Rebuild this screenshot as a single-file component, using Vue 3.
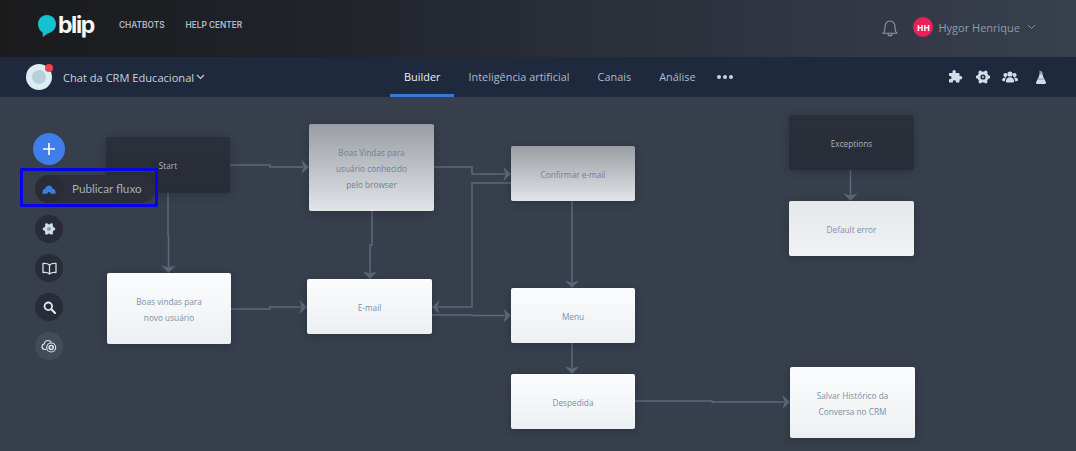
<script setup>
const nodes = [
  { id: 'start', x: 106, y: 137, w: 124, h: 56, kind: 'dark', lines: ['Start'] },
  { id: 'known', x: 309, y: 124, w: 125, h: 87, kind: 'faded', lines: ['Boas Vindas para', 'usuário conhecido', 'pelo browser'] },
  { id: 'confirm', x: 511, y: 146, w: 124, h: 55, kind: 'faded', lines: ['Confirmar e-mail'] },
  { id: 'exceptions', x: 789, y: 115, w: 125, h: 55, kind: 'dark', lines: ['Exceptions'] },
  { id: 'error', x: 789, y: 201, w: 125, h: 55, kind: 'pale', lines: ['Default error'] },
  { id: 'new', x: 107, y: 273, w: 124, h: 71, kind: 'light', lines: ['Boas vindas para', 'novo usuário'] },
  { id: 'email', x: 307, y: 279, w: 125, h: 55, kind: 'light', lines: ['E-mail'] },
  { id: 'menu', x: 511, y: 288, w: 124, h: 55, kind: 'light', lines: ['Menu'] },
  { id: 'bye', x: 511, y: 374, w: 124, h: 55, kind: 'light', lines: ['Despedida'] },
  { id: 'save', x: 790, y: 367, w: 125, h: 71, kind: 'light', lines: ['Salvar Histórico da', 'Conversa no CRM'] }
]
const edges = [
  'M230 165H270V167H303',
  'M168 193V235H168.500V268',
  'M434 167H472V174H505',
  'M372 211V245H370V273',
  'M231 309H270V307H301',
  'M511 183H472V307H438',
  'M432 315H472V315.500H505',
  'M572 201V282',
  'M572 343V368',
  'M635 401H712V402H784',
  'M850.500 170V196'
]
const heads = [
  { x: 309, y: 167, r: 0 },
  { x: 168.500, y: 273, r: 90 },
  { x: 511, y: 174, r: 0 },
  { x: 370, y: 279, r: 90 },
  { x: 307, y: 307, r: 0 },
  { x: 432, y: 307, r: 180 },
  { x: 511, y: 315.500, r: 0 },
  { x: 572, y: 288, r: 90 },
  { x: 572, y: 374, r: 90 },
  { x: 790, y: 402, r: 0 },
  { x: 850.500, y: 201, r: 90 }
]
const lobes = [[13.5, 8], [10.75, 12.76], [5.25, 12.76], [2.5, 8], [5.25, 3.24], [10.75, 3.24]]
const headTransform = (h) => `translate(${h.x} ${h.y}) rotate(${h.r})`
const boxStyle = (n) => ({ left: n.x + 'px', top: n.y - 97 + 'px', width: n.w + 'px', height: n.h + 'px' })
</script>

<template>
  <div class="page">
    <header class="topbar">
      <div class="brand">
        <svg class="bubble" width="20" height="24" viewBox="0 0 20 24">
          <path d="M10 1C15 1 19 4.900 19 10C19 15 15.500 18.500 10.500 19.500L6 23L5.500 18.500C2.800 17 1 13.800 1 10C1 4.900 5 1 10 1Z" fill="#14c1cf" />
        </svg>
        <span class="wordmark">blip</span>
      </div>
      <nav class="toplinks">
        <a>CHATBOTS</a>
        <a>HELP CENTER</a>
      </nav>
      <div class="user">
        <svg class="bell" width="16" height="18" viewBox="0 0 16 18" fill="none" stroke="#8f98a6" stroke-width="1.100">
          <path d="M1 14.200C2.600 13 3 11.500 3 9V7.500C3 4.500 5.200 2 8 2C10.800 2 13 4.500 13 7.500V9C13 11.500 13.400 13 15 14.200Z" stroke-linejoin="round" />
          <path d="M6 14.500C6 16 6.900 16.800 8 16.800C9.100 16.800 10 16 10 14.500" />
        </svg>
        <span class="avatar">HH</span>
        <span class="username">Hygor Henrique</span>
        <svg width="9" height="6" viewBox="0 0 9 6" fill="none" stroke="#8390a0" stroke-width="1"><path d="M1 1L4.500 4.500L8 1" /></svg>
      </div>
    </header>

    <div class="subbar">
      <div class="bot">
        <span class="botpic">
          <span class="botcore"></span>
          <span class="botdot"></span>
        </span>
        <span class="botname">Chat da CRM Educacional</span>
        <svg width="9" height="6" viewBox="0 0 9 6" fill="none" stroke="#c9d3dd" stroke-width="1.100"><path d="M1 1L4.500 4.500L8 1" /></svg>
      </div>
      <nav class="tabs">
        <a class="tab active">Builder</a>
        <a class="tab">Inteligência artificial</a>
        <a class="tab">Canais</a>
        <a class="tab">Análise</a>
        <span class="more"><i></i><i></i><i></i></span>
      </nav>
      <div class="tools">
        <svg width="17" height="16" viewBox="0 0 17 16" fill="#cfe0ea">
          <path d="M6 1.500C7 .5 8.700 1 8.700 2.500V4H11.500C12.100 4 12.500 4.400 12.500 5V7H13.500C15.800 7 15.800 10.500 13.500 10.500H12.500V12.500C12.500 13.100 12.100 13.500 11.500 13.500H9V12.800C9 10.800 5.800 10.800 5.800 12.800V13.500H3C2.400 13.500 2 13.100 2 12.500V10.200H3C5 10.200 5 7 3 7H2V5C2 4.400 2.400 4 3 4H5.500V2.800C5.500 2.300 5.700 1.800 6 1.500Z" />
        </svg>
        <svg width="16" height="16" viewBox="0 0 16 16" fill="#cfe0ea">
          <circle cx="8" cy="8" r="5.500" />
          <circle v-for="(p, i) in lobes" :key="i" :cx="p[0]" :cy="p[1]" r="1.700" />
          <circle cx="8" cy="8" r="2.600" fill="#1f293d" />
          <circle cx="8" cy="8" r="1.300" fill="#8fa3b5" />
        </svg>
        <svg width="16" height="14" viewBox="0 0 16 14" fill="#cfe0ea">
          <circle cx="8" cy="4" r="2.600" />
          <path d="M3.800 12C3.800 8.700 5.600 7.200 8 7.200C10.400 7.200 12.200 8.700 12.200 12C11 12.700 5 12.700 3.800 12Z" />
          <circle cx="3.400" cy="5" r="2" />
          <path d="M0 10.500C0 8.500 1.200 7.400 3.400 7.400C3.800 7.400 4.100 7.500 4.400 7.600C3.400 8.500 3 9.700 2.900 11.300C1.700 11.300 .6 11 0 10.500Z" />
          <circle cx="12.600" cy="5" r="2" />
          <path d="M16 10.500C16 8.500 14.800 7.400 12.600 7.400C12.200 7.400 11.900 7.500 11.600 7.600C12.600 8.500 13 9.700 13.100 11.300C14.300 11.300 15.400 11 16 10.500Z" />
        </svg>
        <svg class="flask" width="12" height="16" viewBox="0 0 12 16">
          <path fill="#8fa3b5" d="M4.500 1.500L7.500 3V6.500L4.500 6.500Z" />
          <path fill="#cfe0ea" d="M4.200 5.500H7.800V7L10.800 13C11.300 14 10.700 15 9.600 15H2.400C1.300 15 .7 14 1.200 13L4.200 7Z" />
          <path fill="#8fa3b5" d="M3.300 9.500H8.700L9.300 10.700H2.700Z" />
        </svg>
      </div>
    </div>

    <main class="canvas">
      <svg class="wires" width="1076" height="354" viewBox="0 97 1076 354">
        <path v-for="(d, i) in edges" :key="i" :d="d" fill="none" stroke="#5d6879" stroke-width="1.500" />
        <path
          v-for="(h, i) in heads"
          :key="'h' + i"
          :transform="headTransform(h)"
          d="M0 0L-7.500 -7L-5.500 0L-7.500 7Z"
          fill="#5d6879"
        />
      </svg>

      <div v-for="n in nodes" :key="n.id" class="node" :class="n.kind" :style="boxStyle(n)">
        <span v-for="line in n.lines" :key="line">{{ line }}</span>
      </div>

      <aside class="rail">
        <button class="add">
          <svg width="14" height="14" viewBox="0 0 14 14" stroke="#fff" stroke-width="1.600"><path d="M7 1V13M1 7H13" /></svg>
        </button>
        <div class="publish">
          <span class="circle">
            <svg width="14" height="9" viewBox="0 0 14 9">
              <path fill="#3f7de0" d="M.5 8.700V7C.5 5.200 1.700 3.900 3.200 3.800C3.700 1.800 5.200 .4 7 .4C8.800 .4 10.300 1.800 10.800 3.800C12.300 3.900 13.500 5.200 13.500 7V8.700H8.700C8.700 7.600 8 6.900 7 6.900C6 6.900 5.300 7.600 5.300 8.700Z" />
            </svg>
          </span>
          <span class="publish-label">Publicar fluxo</span>
        </div>
        <span class="circle">
          <svg width="14" height="14" viewBox="0 0 16 16" fill="#cfe0ea">
            <circle cx="8" cy="8" r="5.500" />
            <circle v-for="(p, i) in lobes" :key="i" :cx="p[0]" :cy="p[1]" r="1.700" />
            <circle cx="8" cy="8" r="2.400" fill="#8a9db0" />
          </svg>
        </span>
        <span class="circle">
          <svg width="15" height="13" viewBox="0 0 15 13" fill="none" stroke="#cfe0ea" stroke-width="1.300">
            <path d="M7.500 3C6 1.600 3.500 1.200 1 1.500V10.500C3.500 10.200 6 10.600 7.500 12C9 10.600 11.500 10.200 14 10.500V1.500C11.500 1.200 9 1.600 7.500 3Z" stroke-linejoin="round" />
            <path d="M7.500 3V12" />
          </svg>
        </span>
        <span class="circle">
          <svg width="13" height="13" viewBox="0 0 13 13" fill="none" stroke="#dbe8f0" stroke-width="1.800">
            <circle cx="5.300" cy="5.300" r="3.800" />
            <path d="M8.300 8.300L12 12" stroke-width="2.200" stroke-linecap="round" />
          </svg>
        </span>
        <span class="circle soft">
          <svg width="16" height="14" viewBox="0 0 16 14" fill="none" stroke="#dbe6ee" stroke-width="1.200">
            <path d="M5 10.500H4C2.300 10.500 1 9.200 1 7.600C1 6.200 2 5.100 3.200 4.800C3.600 2.800 5.100 1.500 7 1.500C8.400 1.500 9.600 2.200 10.300 3.300" />
            <circle cx="10.200" cy="8.500" r="4.500" fill="#434b59" />
            <circle cx="10.200" cy="8.500" r="2" stroke-width="1.600" />
          </svg>
        </span>
      </aside>

      <div class="callout"></div>
    </main>
  </div>
</template>

<style>
html, body { margin: 0; background: #373f4d; }
</style>

<style scoped>
.page {
  width: 1076px;
  height: 451px;
  overflow: hidden;
  display: flex;
  flex-direction: column;
  font-family: "Open Sans", "Liberation Sans", sans-serif;
}
.topbar {
  height: 57px;
  flex: none;
  display: flex;
  align-items: center;
  padding-left: 37px;
  padding-right: 40px;
  box-sizing: border-box;
  background: linear-gradient(90deg, #1b1b1c 0%, #20232a 30%, #2b313b 60%, #383f4d 100%);
}
.brand {
  display: flex;
  align-items: center;
  gap: 1px;
  width: 82px;
  margin-bottom: 8px;
}
.bubble { flex: none; margin-top: 2px; }
.wordmark {
  font-family: "Inter", "Liberation Sans", sans-serif;
  font-weight: 700;
  font-size: 23px;
  line-height: 24px;
  letter-spacing: -1.400px;
  color: #f6f7f8;
}
.toplinks {
  display: flex;
  gap: 21px;
  margin-bottom: 7px;
}
.toplinks a {
  font-family: "Inter", "Liberation Sans", sans-serif;
  font-size: 8.300px;
  font-weight: 600;
  color: #aebbc7;
}
.user {
  margin-left: auto;
  display: flex;
  align-items: center;
  margin-bottom: 3px;
}
.bell { margin-right: 15px; margin-top: 2px; }
.avatar {
  width: 20px;
  height: 20px;
  border-radius: 50%;
  background: #ec1e5c;
  color: #fff;
  font-size: 8.500px;
  font-weight: 700;
  display: flex;
  align-items: center;
  justify-content: center;
  margin-right: 5px;
}
.username {
  font-size: 11px;
  color: #8d9bae;
  margin-right: 7px;
}
.subbar {
  height: 40px;
  flex: none;
  display: flex;
  align-items: center;
  position: relative;
  padding: 0 29px 0 26px;
  box-sizing: border-box;
  background: #1f293d;
}
.bot { display: flex; align-items: center; width: 364px; }
.botpic {
  position: relative;
  width: 26px;
  height: 26px;
  border-radius: 50%;
  background: #dcecf1;
  display: flex;
  align-items: center;
  justify-content: center;
  margin-right: 11px;
}
.botcore { width: 14px; height: 14px; border-radius: 50%; background: #b8d0dd; }
.botdot {
  position: absolute;
  top: 0;
  right: -1px;
  width: 8px;
  height: 8px;
  border-radius: 50%;
  background: #f0424a;
}
.botname {
  font-size: 11.100px;
  color: #c9d3dd;
  margin-right: 2px;
}
.tabs { display: flex; align-items: stretch; height: 40px; }
.tab {
  font-size: 10.900px;
  line-height: 40px;
  color: #a8bccd;
  padding: 0 14px;
  box-sizing: border-box;
  height: 40px;
}
.tab.active {
  color: #e8edf1;
  border-bottom: 3px solid #3a75d9;
}
.more {
  display: flex;
  align-items: center;
  gap: 2px;
  margin-left: 7px;
}
.more i {
  width: 4px;
  height: 4px;
  border-radius: 50%;
  background: #c6d4de;
}
.tools {
  margin-left: auto;
  display: flex;
  align-items: center;
  gap: 11px;
}
.flask { margin-left: 6px; }
.canvas {
  position: relative;
  flex: 1;
  background: #373f4d;
}
.wires {
  position: absolute;
  left: 0;
  top: 0;
}
.node {
  position: absolute;
  display: flex;
  flex-direction: column;
  align-items: center;
  justify-content: center;
  text-align: center;
  box-sizing: border-box;
  padding-top: 2px;
  border-radius: 2px;
  font-size: 8.250px;
  line-height: 16px;
  box-shadow: 0 2px 8px rgba(20, 25, 35, 0.3);
}
.node.dark {
  background: linear-gradient(180deg, #2a2f3a, #272c37);
  color: #aab2bb;
}
.node.faded {
  background: linear-gradient(180deg, #9a9da3, #e1e5e8);
  color: #6f8198;
}
.node.pale {
  background: linear-gradient(180deg, #e5e8eb, #f0f2f4);
  color: #7b90ab;
}
.node.light {
  background: linear-gradient(180deg, #fbfcfd, #edf0f3);
  color: #7b90ab;
}
.rail {
  position: absolute;
  left: 33px;
  top: 36px;
  width: 32px;
  display: flex;
  flex-direction: column;
  align-items: center;
  gap: 11px;
}
.add {
  width: 32px;
  height: 32px;
  padding: 0;
  border: 0;
  border-radius: 50%;
  background: #3f7de8;
  display: flex;
  align-items: center;
  justify-content: center;
  margin-bottom: -1px;
}
.circle {
  width: 28px;
  height: 28px;
  flex: none;
  border-radius: 50%;
  background: #272c37;
  display: flex;
  align-items: center;
  justify-content: center;
}
.circle.soft { background: #434b59; }
.publish {
  align-self: flex-start;
  margin-left: 2px;
  margin-bottom: 1px;
  width: 120px;
  height: 28px;
  flex: none;
  display: flex;
  align-items: center;
  border-radius: 14px;
  background: #2a2f3a;
}
.publish-label {
  font-family: "Lato", "Liberation Sans", sans-serif;
  font-size: 11.700px;
  color: #a7adb5;
  margin-left: 9px;
  padding-bottom: 2px;
  white-space: nowrap;
}
.callout {
  position: absolute;
  left: 20px;
  top: 71px;
  width: 138px;
  height: 39px;
  box-sizing: border-box;
  border: 3px solid #0505e6;
  border-radius: 1px;
}
.callout::before {
  content: "";
  position: absolute;
  left: 0;
  right: 0;
  top: 0;
  height: 1px;
  background: #7a1f33;
}
</style>
